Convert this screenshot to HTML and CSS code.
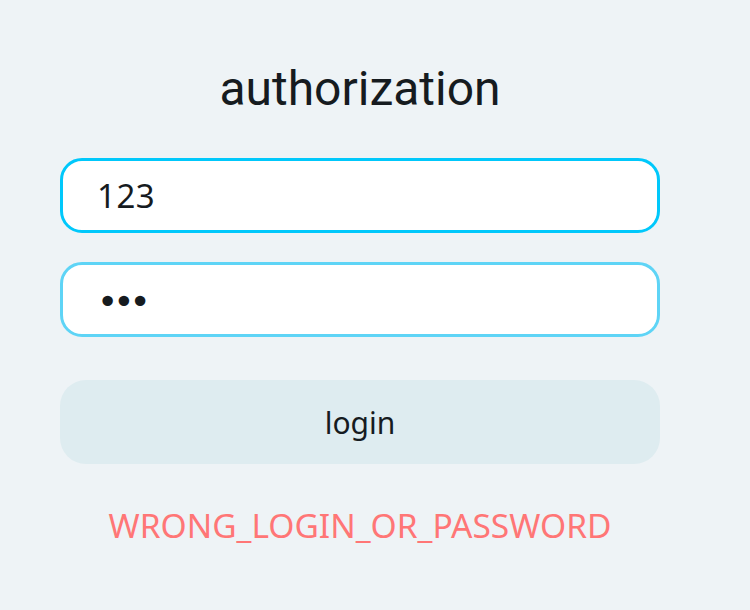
FILE: index.html
```html
<!DOCTYPE html>
<html>
<head>
<meta charset="utf-8">
<link rel="stylesheet" href="styles.css">
</head>
<body>
<div class="page">
  <form class="auth">
    <h1 class="title">authorization</h1>
    <input class="field field-focus" type="text" value="123">
    <input class="field field-pass" type="password" value="abc">
    <button class="btn" type="button">login</button>
    <div class="error">WRONG_LOGIN_OR_PASSWORD</div>
  </form>
</div>
</body>
</html>
```

FILE: styles.css
```css
html, body {
  margin: 0;
  padding: 0;
  background: #eef3f6;
}
.page {
  width: 750px;
  height: 610px;
  box-sizing: border-box;
  padding: 0 90px 0 60px;
}
.auth {
  display: flex;
  flex-direction: column;
  width: 600px;
}
.title {
  margin: 55px 0 0;
  height: 67px;
  font-family: Roboto, sans-serif;
  font-weight: 400;
  font-size: 48px;
  line-height: 67px;
  color: #161b1f;
  text-align: center;
}
.field {
  box-sizing: border-box;
  width: 600px;
  height: 75px;
  margin: 36px 0 0;
  padding: 0 34px;
  border: 3px solid #00c8fb;
  border-radius: 22px;
  background: #fff;
  font-family: "Noto Sans", sans-serif;
  font-size: 33px;
  letter-spacing: 0.5px;
  color: #161b1f;
  outline: none;
}
.field-pass {
  margin-top: 29px;
  border-color: #5ed4f6;
  font-family: "DejaVu Sans", sans-serif;
  font-size: 36px;
  letter-spacing: -5px;
  padding-top: 4px;
}
.btn {
  box-sizing: border-box;
  width: 600px;
  height: 84px;
  margin-top: 43px;
  border: none;
  border-radius: 26px;
  background: #deecf0;
  font-family: "Noto Sans", sans-serif;
  font-size: 30px;
  color: #161b1f;
  padding: 0;
}
.error {
  margin-top: 38px;
  font-family: "Noto Sans", sans-serif;
  font-size: 33.5px;
  line-height: 46px;
  color: #ff7676;
  text-align: center;
}
```
